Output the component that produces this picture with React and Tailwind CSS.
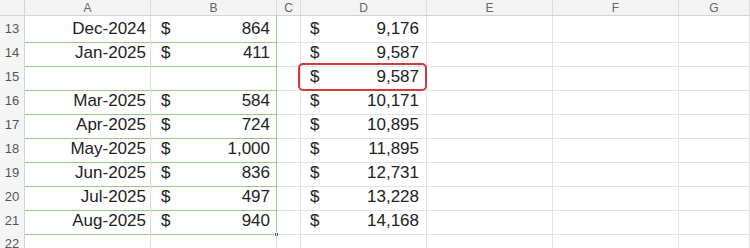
import React from "react";

const cols = ["A", "B", "C", "D", "E", "F", "G"];

const rows = [
  { n: 13, a: "Dec-2024", b: "864", d: "9,176" },
  { n: 14, a: "Jan-2025", b: "411", d: "9,587" },
  { n: 15, a: "", b: "", d: "9,587", mark: true },
  { n: 16, a: "Mar-2025", b: "584", d: "10,171" },
  { n: 17, a: "Apr-2025", b: "724", d: "10,895" },
  { n: 18, a: "May-2025", b: "1,000", d: "11,895" },
  { n: 19, a: "Jun-2025", b: "836", d: "12,731" },
  { n: 20, a: "Jul-2025", b: "497", d: "13,228" },
  { n: 21, a: "Aug-2025", b: "940", d: "14,168", last: true },
  { n: 22, a: "", b: "", d: "", empty: true },
];

const grid = "grid grid-cols-[25px_126px_126px_24px_126px_126px_126px_1fr]";

export default function App() {
  return (
    <div className="w-[750px] h-[248px] overflow-hidden bg-white text-[#222] font-['Liberation_Sans',Arial,sans-serif]">
      {/* Column headers */}
      <div className={`${grid} h-[16px] bg-[#f3f3f3] border-b border-[#d4d4d4]`}>
        <div className="border-r border-[#d4d4d4]" />
        {cols.map((c) => (
          <div
            key={c}
            className="flex items-center justify-center text-[12px] leading-none text-[#666] border-r border-[#dcdcdc]"
          >
            {c}
          </div>
        ))}
      </div>

      {/* Rows */}
      {rows.map((r) => {
        const green = !r.empty;
        return (
          <div key={r.n} className={`${grid} h-[24px]`}>
            <div className="flex items-center justify-center bg-[#f5f5f5] text-[13px] text-[#555] border-r border-b border-[#d4d4d4]">
              {r.n}
            </div>
            <div
              className={`flex items-center justify-end pr-[4px] text-[17px] border-r border-[#dcdcdc] border-b ${
                green ? "border-b-[#9cc985]" : "border-b-[#e1e1e1]"
              }`}
            >
              {r.a}
            </div>
            <div
              className={`relative flex items-center justify-between pl-[10px] pr-[6px] text-[17px] border-r border-b ${
                green ? "border-r-[#9cc985] border-b-[#9cc985]" : "border-r-[#e1e1e1] border-b-[#e1e1e1]"
              }`}
            >
              <span>{r.b ? "$" : ""}</span>
              <span>{r.b}</span>
              {r.last && (
                <span className="absolute right-[-3px] bottom-[-3px] w-[5px] h-[5px] bg-[#217346] border border-white" />
              )}
            </div>
            <div className="border-r border-b border-[#e1e1e1]" />
            <div className="relative flex items-center justify-between pl-[9px] pr-[7px] text-[17px] border-r border-b border-[#e1e1e1]">
              <span>{r.d ? "$" : ""}</span>
              <span>{r.d}</span>
              {r.mark && (
                <span className="absolute left-[-3px] right-[-1px] top-[-1px] bottom-[-1px] rounded-[5px] border-2 border-[#d2393f]" />
              )}
            </div>
            <div className="border-r border-b border-[#e1e1e1]" />
            <div className="border-r border-b border-[#e1e1e1]" />
            <div className="border-r border-b border-[#e1e1e1]" />
          </div>
        );
      })}
    </div>
  );
}
